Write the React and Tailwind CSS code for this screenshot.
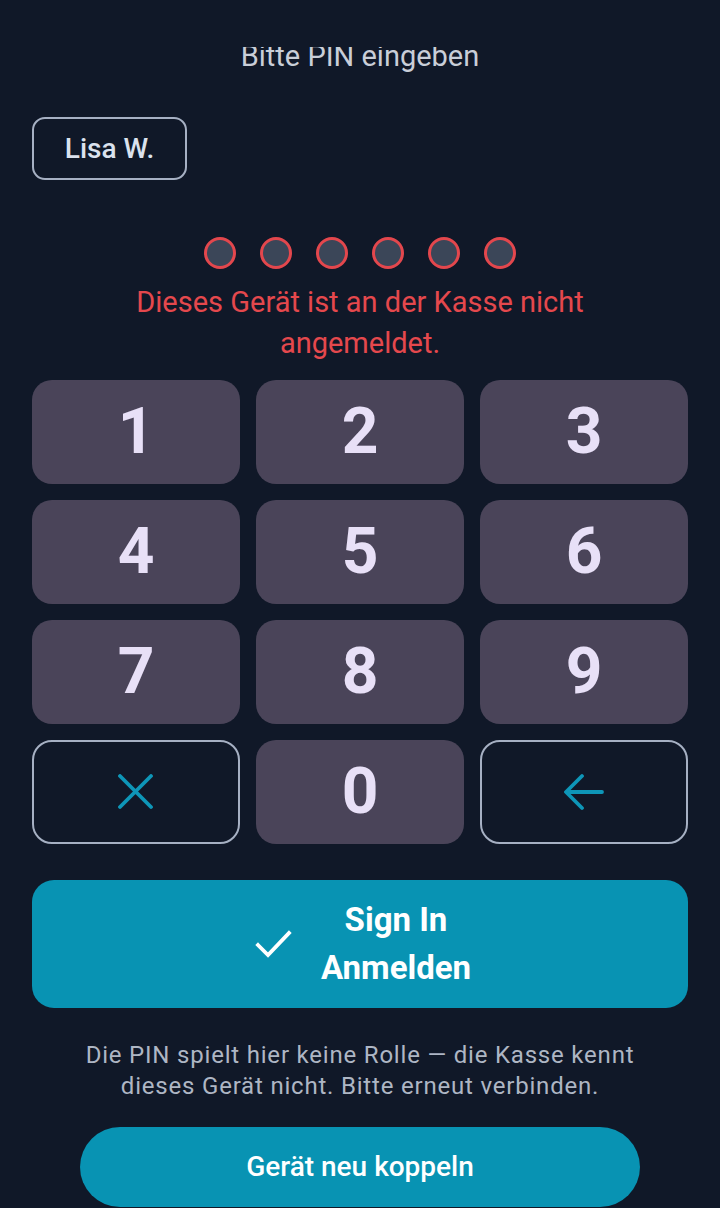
import React from "react";

const keys = ["1", "2", "3", "4", "5", "6", "7", "8", "9"];

function CloseIcon() {
  return (
    <svg width="36" height="36" viewBox="0 0 36 36" fill="none" stroke="#0e96b8" strokeWidth="3.8" strokeLinecap="round">
      <path d="M2 2 L33 33 M33 2 L2 33" />
    </svg>
  );
}

function BackIcon() {
  return (
    <svg width="40" height="38" viewBox="0 0 40 38" fill="none" stroke="#0e96b8" strokeWidth="3.8" strokeLinecap="round" strokeLinejoin="round">
      <path d="M38 19 H3 M18 3 L2 19 L18 35" />
    </svg>
  );
}

function CheckIcon() {
  return (
    <svg width="38" height="30" viewBox="0 0 38 30" fill="none" stroke="#ffffff" strokeWidth="3.8" strokeLinecap="square">
      <path d="M3 16 L13 26 L34 4" />
    </svg>
  );
}

export default function App() {
  return (
    <div className="w-[720px] h-[1208px] overflow-hidden bg-[#101828] flex flex-col" style={{ fontFamily: "Roboto, 'Noto Sans', sans-serif" }}>
      <div className="h-[47px] shrink-0 bg-[#101828] relative z-10" />
      <div className="flex-1 overflow-hidden">
        <div className="-mt-[9px] px-8 flex flex-col">
          <p className="text-center text-[29px] leading-[36px] text-[#c9ced8]">Bitte PIN eingeben</p>

          <div className="mt-[43px]">
            <div className="inline-flex items-center justify-center w-[155px] h-[63px] rounded-[13px] border-2 border-[#a6b0c3] text-[28px] font-medium text-[#dbe2ee]">
              Lisa W.
            </div>
          </div>

          <div className="mt-[57px] flex justify-center gap-6">
            {[0, 1, 2, 3, 4, 5].map((i) => (
              <div key={i} className="w-8 h-8 rounded-full border-[3px] border-[#e3474d] bg-[#3b4658]" />
            ))}
          </div>

          <p className="mt-[13px] mx-auto max-w-[480px] text-center text-[29px] leading-[41px] text-[#e5484d]">
            Dieses Gerät ist an der Kasse nicht angemeldet.
          </p>

          <div className="mt-[16px] grid grid-cols-3 gap-4">
            {keys.map((k) => (
              <div key={k} className="h-[104px] rounded-[20px] bg-[#4a4459] flex items-center justify-center text-[64px] font-bold text-[#e8e0f7]">
                {k}
              </div>
            ))}
            <div className="h-[104px] rounded-[20px] border-2 border-[#a6b0c3] flex items-center justify-center">
              <CloseIcon />
            </div>
            <div className="h-[104px] rounded-[20px] bg-[#4a4459] flex items-center justify-center text-[64px] font-bold text-[#e8e0f7]">
              0
            </div>
            <div className="h-[104px] rounded-[20px] border-2 border-[#a6b0c3] flex items-center justify-center">
              <BackIcon />
            </div>
          </div>

          <div className="mt-9 h-32 rounded-[22px] bg-[#0893b3] flex items-center justify-center gap-[28px] pl-[6px]">
            <CheckIcon />
            <div className="flex flex-col items-center text-white font-bold text-[33px] leading-[48px]">
              <span>Sign In</span>
              <span>Anmelden</span>
            </div>
          </div>

          <p className="mt-8 text-center text-[24px] leading-[31px] text-[#aeb6c4] tracking-[0.8px]">
            Die PIN spielt hier keine Rolle — die Kasse kennt
            <br />
            dieses Gerät nicht. Bitte erneut verbinden.
          </p>

          <div className="mt-[25px] mx-12 h-20 rounded-full bg-[#0893b3] flex items-center justify-center text-white text-[28px] font-medium">
            Gerät neu koppeln
          </div>
        </div>
      </div>
    </div>
  );
}
